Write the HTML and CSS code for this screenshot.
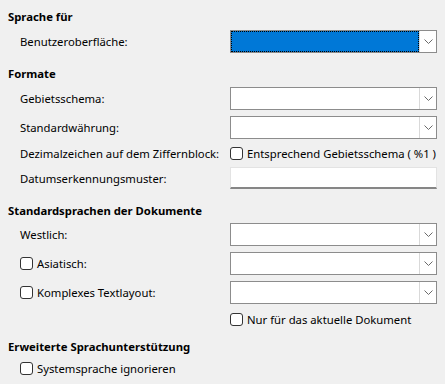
FILE: index.html
```html
<!DOCTYPE html>
<html lang="de">
<head>
<meta charset="utf-8">
<link rel="stylesheet" href="styles.css">
</head>
<body>
<div class="page">
  <div class="heading h1">Sprache für</div>
  <div class="row r-first">
    <div class="label">Benutzeroberfläche:</div>
    <div class="combo focused"><div class="field"><div class="focus"></div></div><div class="btn"><svg width="9" height="5" viewBox="0 0 9 5"><path d="M0.5 0.5 L4.5 4.5 L8.5 0.5" fill="none" stroke="#6a6a6a" stroke-width="1"/></svg></div></div>
  </div>

  <div class="heading h2">Formate</div>
  <div class="row r-first">
    <div class="label">Gebietsschema:</div>
    <div class="combo"><div class="field"></div><div class="btn"><svg width="9" height="5" viewBox="0 0 9 5"><path d="M0.5 0.5 L4.5 4.5 L8.5 0.5" fill="none" stroke="#6a6a6a" stroke-width="1"/></svg></div></div>
  </div>
  <div class="row r-combo">
    <div class="label">Standardwährung:</div>
    <div class="combo"><div class="field"></div><div class="btn"><svg width="9" height="5" viewBox="0 0 9 5"><path d="M0.5 0.5 L4.5 4.5 L8.5 0.5" fill="none" stroke="#6a6a6a" stroke-width="1"/></svg></div></div>
  </div>
  <div class="row r-check">
    <div class="label">Dezimalzeichen auf dem Ziffernblock:</div>
    <div class="check"><span class="box"></span><span>Entsprechend Gebietsschema ( %1 )</span></div>
  </div>
  <div class="row r-text">
    <div class="label">Datumserkennungsmuster:</div>
    <div class="textfield"></div>
  </div>

  <div class="heading h3">Standardsprachen der Dokumente</div>
  <div class="row r-first3">
    <div class="label">Westlich:</div>
    <div class="combo"><div class="field"></div><div class="btn"><svg width="9" height="5" viewBox="0 0 9 5"><path d="M0.5 0.5 L4.5 4.5 L8.5 0.5" fill="none" stroke="#6a6a6a" stroke-width="1"/></svg></div></div>
  </div>
  <div class="row r-combo">
    <div class="label check"><span class="box"></span><span>Asiatisch:</span></div>
    <div class="combo"><div class="field"></div><div class="btn"><svg width="9" height="5" viewBox="0 0 9 5"><path d="M0.5 0.5 L4.5 4.5 L8.5 0.5" fill="none" stroke="#6a6a6a" stroke-width="1"/></svg></div></div>
  </div>
  <div class="row r-combo">
    <div class="label check"><span class="box"></span><span>Komplexes Textlayout:</span></div>
    <div class="combo"><div class="field"></div><div class="btn"><svg width="9" height="5" viewBox="0 0 9 5"><path d="M0.5 0.5 L4.5 4.5 L8.5 0.5" fill="none" stroke="#6a6a6a" stroke-width="1"/></svg></div></div>
  </div>
  <div class="row r-check2">
    <div class="label"></div>
    <div class="check"><span class="box"></span><span>Nur für das aktuelle Dokument</span></div>
  </div>

  <div class="heading h4">Erweiterte Sprachunterstützung</div>
  <div class="row r-last">
    <div class="label check"><span class="box"></span><span>Systemsprache ignorieren</span></div>
  </div>
</div>
</body>
</html>
```
FILE: styles.css
```css
html, body {
  margin: 0;
  padding: 0;
  background: #f0f0f0;
}
body {
  font-family: "Noto Sans", "Open Sans", sans-serif;
  font-size: 11.3px;
  color: #000;
}
.page {
  width: 445px;
  height: 384px;
  padding-top: 8px;
  box-sizing: border-box;
  overflow: hidden;
}
.heading {
  font-weight: bold;
  height: 18px;
  line-height: 18px;
  padding-left: 8px;
  white-space: nowrap;
}
.h2 { margin-top: 12px; }
.h3 { margin-top: 13px; }
.h4 { margin-top: 9px; }
.row {
  display: flex;
  align-items: center;
  height: 23px;
  white-space: nowrap;
}
.r-first { margin-top: 4px; }
.r-first3 { margin-top: 3px; }
.r-combo { margin-top: 6px; }
.r-check { margin-top: 4px; height: 20px; }
.r-text { margin-top: 4px; height: 22px; }
.r-check2 { margin-top: 5px; height: 20px; }
.r-last { margin-top: 2px; height: 20px; }
.label {
  width: 210px;
  padding-left: 20px;
  flex: none;
}
.combo {
  width: 207px;
  height: 23px;
  box-sizing: border-box;
  border: 1px solid #8c8c8c;
  background: #fff;
  display: flex;
  flex: none;
}
.field {
  flex: 1;
  position: relative;
}
.combo.focused .field {
  background: #0078d7;
}
.focus {
  position: absolute;
  inset: 0;
  border: 1px dotted #000;
}
.btn {
  width: 16px;
  border-left: 1px solid #d9d9d9;
  display: flex;
  align-items: center;
  justify-content: center;
  background: #fff;
}
.check {
  display: flex;
  align-items: center;
  gap: 4px;
}
.box {
  width: 11px;
  height: 11px;
  border: 1px solid #333;
  border-radius: 3px;
  background: #fff;
  flex: none;
}
.textfield {
  width: 207px;
  height: 22px;
  box-sizing: border-box;
  background: #fff;
  border: 1px solid #e3e3e3;
  border-bottom: 2px solid #868686;
  flex: none;
}
```
